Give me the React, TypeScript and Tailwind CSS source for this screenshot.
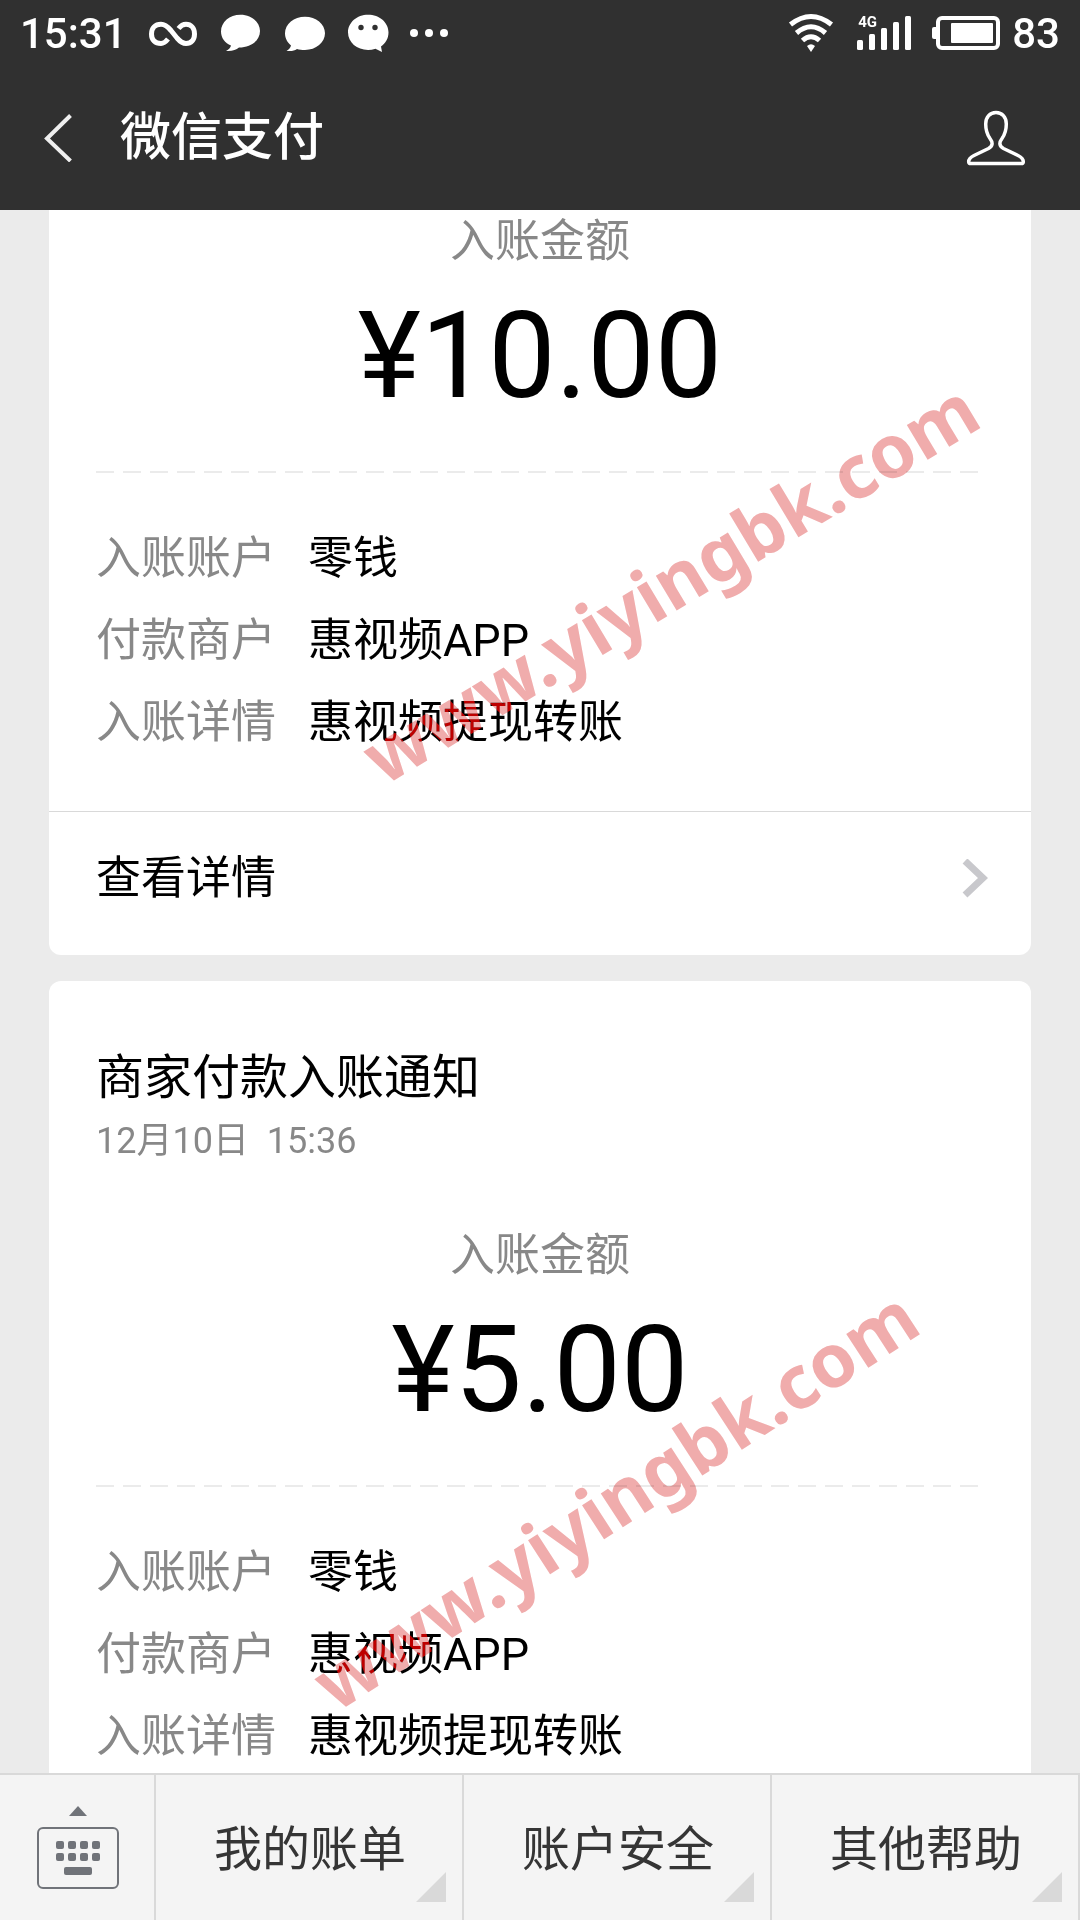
import type { ReactNode } from "react";

interface Detail {
  label: string;
  value: string;
}

interface NoticeProps {
  title?: string;
  time?: string;
  amount: string;
  details: Detail[];
  showMore?: boolean;
}

const details: Detail[] = [
  { label: "入账账户", value: "零钱" },
  { label: "付款商户", value: "惠视频APP" },
  { label: "入账详情", value: "惠视频提现转账" },
];

const menus = ["我的账单", "账户安全", "其他帮助"];

const StatusBar = () => (
  <div className="flex h-[66px] items-center justify-between px-5 text-[42px] leading-[68px] font-medium">
    <div className="flex items-center">
      <span className="pt-0.5">15:31</span>
      <svg className="ml-[21px] h-[66px] w-[300px]" viewBox="148 0 300 66" fill="#fff">
        {/* infinity */}
        <path
          d="M168 39C166 41.500 164 43.500 161 43.500C155 43.500 151.500 40 151.500 34C151.500 28 155 24.300 161 24.300C165 24.300 168 27 171 30.500L177 38C180 41.500 183 43.500 186 43.500C191 43.500 194.500 40 194.500 34C194.500 28 191 24.300 186 24.300C182.500 24.300 180.500 26 178.500 28.500"
          fill="none"
          stroke="#fff"
          strokeWidth="5"
        />
        {/* message bubbles */}
        <path d="M240.500 14.700C251.500 14.700 260 22 260 31C260 40.500 251 47.500 239 47.500C236 50 232 51.500 226 51C229 49.500 230.500 47.500 231 45.500C225 43 221 38 221 31.500C221 22 229.500 14.700 240.500 14.700Z" />
        <path d="M305 16.700C316 16.700 325 24 325 33.300C325 42.500 316 50 305 50C302 50 299 49.600 297 49C294 51 291 51.500 286.500 50.800C289 49.500 290.500 47.500 291 45.500C287.500 42.500 285 38.500 285 33.300C285 24 294 16.700 305 16.700Z" />
        {/* chat face */}
        <path d="M368 14.700C379.500 14.700 388.500 22.500 388.500 32.300C388.500 38.500 385.500 43.500 381 46.500L382 52L375.500 48.800C373 49.600 370.500 50 368 50C357 50 348 42.500 348 32.300C348 22.500 357 14.700 368 14.700Z" />
        <circle cx="361" cy="27.500" r="2.700" fill="#303030" />
        <circle cx="375" cy="27.500" r="2.700" fill="#303030" />
        <circle cx="414" cy="33" r="4" />
        <circle cx="429" cy="33" r="4" />
        <circle cx="444" cy="33" r="4" />
      </svg>
    </div>
    <div className="flex items-center">
      <div className="relative">
        <svg className="h-[66px] w-[214px]" viewBox="788 0 214 66" fill="#fff">
          {/* wifi */}
          <g fill="none" stroke="#fff" strokeWidth="5">
            <path d="M790.500 24.500Q811 8.500 831.500 24.500" />
            <path d="M796.500 33Q811 20.500 825.500 33" />
            <path d="M802.500 40.500Q811 33 819.500 40.500" />
          </g>
          <path d="M807 46Q811 42.500 815 46L811 52Z" />
          {/* signal */}
          <rect x="857" y="40" width="6" height="10" rx="1.500" />
          <rect x="869" y="34" width="6" height="16" rx="1.500" />
          <rect x="881" y="28" width="6" height="22" rx="1.500" />
          <rect x="893" y="22" width="6" height="28" rx="1.500" />
          <rect x="905" y="16" width="6" height="34" rx="1.500" />
          {/* battery */}
          <rect x="932" y="27" width="6" height="12" rx="2" />
          <rect x="938" y="18" width="60" height="30" rx="4" fill="none" stroke="#fff" strokeWidth="4" />
          <rect x="951" y="23" width="42" height="20" rx="1" />
        </svg>
        <span className="absolute top-[14px] left-[70px] text-[15px] leading-4 font-bold">4G</span>
      </div>
      <span className="ml-2.5 pt-0.5">83</span>
    </div>
  </div>
);

const NavBar = () => (
  <div className="flex h-36 items-center px-11">
    <button type="button" aria-label="返回" className="mr-12">
      <svg className="h-12 w-7" viewBox="0 0 28 48" fill="none" stroke="#efefef" strokeWidth="4">
        <path d="M26.500 1.500L3 24.500L26.500 47" />
      </svg>
    </button>
    <h1 className="flex-1 text-[51px] leading-[60px] font-medium">微信支付</h1>
    <button type="button" aria-label="账户" className="mr-[9px]">
      <svg className="h-14 w-[62px]" viewBox="965 110 62 56" fill="none" stroke="#fff" strokeWidth="3.500">
        <path
          d="M996 112.500C1002 112.500 1006.300 117 1006.300 124C1006.300 131 1004.500 135 1002 138.500C999 142.500 999 146 1003.500 148.500L1018 155.500C1022.500 157.800 1023.500 159.500 1023.300 162C1023.200 163 1022.800 163.500 1021.500 163.500H970.500C969.200 163.500 968.800 163 968.700 162C968.500 159.500 969.500 157.800 974 155.500L988.500 148.500C993 146 993 142.500 990 138.500C987.500 135 985.700 131 985.700 124C985.700 117 990 112.500 996 112.500Z"
          strokeLinejoin="round"
        />
      </svg>
    </button>
  </div>
);

const Notice = ({ title, time, amount, details, showMore }: NoticeProps) => (
  <article className={title ? "rounded-xl bg-white pt-[62px]" : "rounded-b-xl bg-white pt-0.5"}>
    {title && (
      <header className="mb-[56px] px-[47px]">
        <h2 className="text-[48px] leading-[70px]">{title}</h2>
        <time className="block text-[36px] leading-[57px] whitespace-pre text-[#888]">{time}</time>
      </header>
    )}
    <div className="px-[47px]">
      <p className="text-center text-[45px] leading-[60px] text-[#888]">入账金额</p>
      <p className="text-center text-[120px] leading-[168px]">{amount}</p>
      <div className="mt-[31px] h-[2px] bg-[repeating-linear-gradient(90deg,#ebebeb_0_18px,transparent_18px_27px)]" />
      <dl className="flex flex-col pt-[45px] pb-[47px] text-[45px] leading-[82px]">
        {details.map((d) => (
          <div key={d.label} className="flex gap-8">
            <dt className="w-[180px] text-[#888]">{d.label}</dt>
            <dd>{d.value}</dd>
          </div>
        ))}
      </dl>
    </div>
    {showMore && (
      <a href="#detail" className="flex items-center justify-between border-t border-[#d9d9d9] px-[43px] pt-[37px] pb-[46px] text-[45px] leading-[60px]">
        <span className="pl-1">查看详情</span>
        <svg className="h-10 w-[26px]" viewBox="0 0 26 40" fill="none" stroke="#c8c8cc" strokeWidth="7">
          <path d="M3 2L21 19L3 36" />
        </svg>
      </a>
    )}
  </article>
);

// tinted red where it crosses dark text, pink on white
const Watermark = ({ className }: { className: string }) => (
  <div className={className}>
    <span className="block rotate-(--tilt) text-[#f0acac] mix-blend-multiply">www.yiyingbk.com</span>
  </div>
);

const MenuCell = ({ children }: { children: ReactNode }) => (
  <button type="button" className="relative flex-1 border-r-2 border-[#d9d9d9] pt-1 pl-0.5 text-[48px] text-[#353535]">
    {children}
    <svg className="absolute right-4 bottom-[18px] h-[30px] w-[30px]" viewBox="0 0 30 30" fill="#d9d9d9">
      <path d="M30 0V30H0Z" />
    </svg>
  </button>
);

export default function App() {
  return (
    <div className="relative flex h-screen flex-col overflow-hidden bg-[#ebebeb] font-[Roboto,'Noto_Sans_CJK_SC',sans-serif] text-black">
      <header className="bg-[#303030] text-white">
        <StatusBar />
        <NavBar />
      </header>

      <main className="flex min-h-0 flex-1 flex-col gap-[26px] overflow-hidden px-[49px]">
        <Notice amount="¥10.00" details={details} showMore />
        <Notice title="商家付款入账通知" time="12月10日  15:36" amount="¥5.00" details={details} />
      </main>

      <Watermark className="pointer-events-none absolute top-[532px] left-[319px] font-['Noto_Sans'] text-[74px] font-bold leading-[100px] [--tilt:-31deg] after:absolute after:inset-0 after:rotate-(--tilt) after:text-[#be0000] after:mix-blend-lighten after:content-['www.yiyingbk.com']" />
      <Watermark className="pointer-events-none absolute top-[1449px] left-[264px] font-['Noto_Sans'] text-[74px] font-bold leading-[100px] [--tilt:-33deg] after:absolute after:inset-0 after:rotate-(--tilt) after:text-[#be0000] after:mix-blend-lighten after:content-['www.yiyingbk.com']" />

      <nav className="flex h-[147px] shrink-0 border-t-2 border-[#d9d9d9] bg-[#f4f4f4]">
        <button type="button" aria-label="键盘" className="flex w-[156px] items-center justify-center border-r-2 border-[#d9d9d9] pl-0.5">
          <svg className="h-[84px] w-[82px]" viewBox="0 0 82 84" fill="#707379">
            <path d="M41 0L50 10H32Z" />
            <rect x="1" y="22" width="80" height="60" rx="5" fill="none" stroke="#707379" strokeWidth="2" />
            {[19, 31, 43, 55].map((x) => (
              <g key={x}>
                <rect x={x} y="35" width="8" height="8" rx="2" />
                <rect x={x} y="47" width="8" height="8" rx="2" />
              </g>
            ))}
            <rect x="27" y="61" width="28" height="8" rx="2" />
          </svg>
        </button>
        {menus.map((m) => (
          <MenuCell key={m}>{m}</MenuCell>
        ))}
      </nav>
    </div>
  );
}
